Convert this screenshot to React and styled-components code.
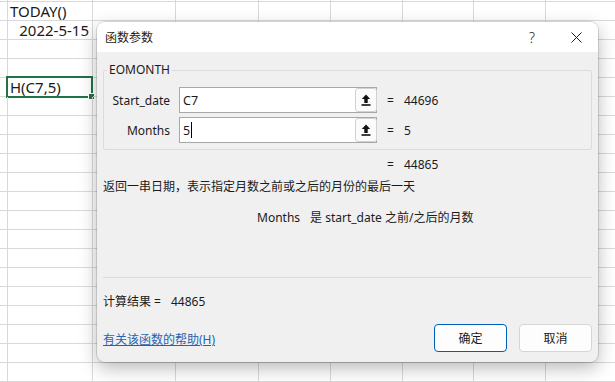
import React from "react";
import styled, { createGlobalStyle } from "styled-components";

const GlobalStyle = createGlobalStyle`
  html, body {
    margin: 0;
    padding: 0;
    background: #ffffff;
    overflow: hidden;
  }
  body {
    font-family: "Noto Sans", "Noto Sans CJK SC", sans-serif;
  }
`;

const colWidths = [8, 85, 83, 83, 72, 72, 71, 72, 72];
const rowCount = 21;

const cellTexts = {
  "1-1": { text: "TODAY()", align: "left" },
  "2-1": { text: "2022-5-15", align: "right" },
  "5-1": { text: "H(C7,5)", align: "left", selected: true },
};

const App = () => {
  return (
    <Page>
      <GlobalStyle />
      <Sheet>
        {Array.from({ length: rowCount + 1 }).map((_, r) =>
          colWidths.map((w, c) => {
            const cell = cellTexts[`${r}-${c}`];
            return (
              <Cell key={`${r}-${c}`} $align={cell?.align}>
                {cell && cell.text}
                {cell?.selected && (
                  <Selection>
                    <Handle />
                  </Selection>
                )}
              </Cell>
            );
          })
        )}
      </Sheet>

      <Dialog>
        <TitleBar>
          <Title>函数参数</Title>
          <TitleButtons>
            <TitleButton>?</TitleButton>
            <TitleButton>
              <svg width="11" height="11" viewBox="0 0 11 11">
                <path
                  d="M0.5 0.5 L10.5 10.5 M10.5 0.5 L0.5 10.5"
                  stroke="#1b1b1b"
                  strokeWidth="1"
                  fill="none"
                />
              </svg>
            </TitleButton>
          </TitleButtons>
        </TitleBar>

        <Body>
          <Group>
            <Legend>EOMONTH</Legend>
            <ArgRow>
              <ArgLabel>Start_date</ArgLabel>
              <ArgInput>
                <InputText>C7</InputText>
                <RefButton>
                  <UploadIcon />
                </RefButton>
              </ArgInput>
              <Equals>=</Equals>
              <ArgValue>44696</ArgValue>
            </ArgRow>
            <ArgRow>
              <ArgLabel>Months</ArgLabel>
              <ArgInput>
                <InputText>
                  5<Caret />
                </InputText>
                <RefButton>
                  <UploadIcon />
                </RefButton>
              </ArgInput>
              <Equals>=</Equals>
              <ArgValue>5</ArgValue>
            </ArgRow>
          </Group>

          <ResultRow>
            <Equals>=</Equals>
            <ArgValue>44865</ArgValue>
          </ResultRow>

          <Description>返回一串日期，表示指定月数之前或之后的月份的最后一天</Description>

          <ArgHelp>
            <ArgHelpName>Months</ArgHelpName>是 start_date 之前/之后的月数
          </ArgHelp>

          <Separator />

          <Formula>
            计算结果 =<FormulaValue>44865</FormulaValue>
          </Formula>

          <Footer>
            <HelpLink>有关该函数的帮助(H)</HelpLink>
            <Buttons>
              <DialogButton $primary>确定</DialogButton>
              <DialogButton>取消</DialogButton>
            </Buttons>
          </Footer>
        </Body>
      </Dialog>
    </Page>
  );
};

const UploadIcon = () => (
  <svg width="10" height="12" viewBox="0 0 10 12">
    <path d="M5 0.5 L0.8 5 H3.3 V9 H6.7 V5 H9.2 Z" fill="#111" />
    <rect x="0.5" y="10.2" width="9" height="1.6" fill="#111" />
  </svg>
);

const Page = styled.div`
  position: relative;
  width: 615px;
  height: 382px;
  overflow: hidden;
  background: #ffffff;
`;

const Sheet = styled.div`
  display: grid;
  grid-template-columns: ${colWidths.map((w) => `${w}px`).join(" ")};
  grid-template-rows: 2px repeat(${rowCount}, 19px);
  font-family: "Noto Sans", "Noto Sans CJK SC", sans-serif;
  font-size: 15px;
  color: #1a1a1a;
`;

const Cell = styled.div`
  position: relative;
  box-sizing: border-box;
  border-right: 1px solid #d9d9d9;
  border-bottom: 1px solid #d9d9d9;
  line-height: 18px;
  white-space: nowrap;
  text-align: ${(p) => p.$align || "left"};
  padding: ${(p) => (p.$align === "right" ? "0 3px 0 0" : "0 0 0 2px")};
`;

const Selection = styled.div`
  position: absolute;
  left: -2px;
  top: -2px;
  right: -1px;
  bottom: -2px;
  border: 2px solid #217346;
  pointer-events: none;
`;

const Handle = styled.div`
  position: absolute;
  right: -4px;
  bottom: -4px;
  width: 5px;
  height: 5px;
  background: #217346;
  border: 1px solid #ffffff;
`;

const Dialog = styled.div`
  position: absolute;
  left: 97px;
  top: 22px;
  width: 501px;
  height: 340px;
  display: flex;
  flex-direction: column;
  border-radius: 8px;
  overflow: hidden;
  background: #f0f0f0;
  box-shadow: 0 0 0 1px rgba(0, 0, 0, 0.12), 0 6px 18px rgba(0, 0, 0, 0.28);
  font-family: "Noto Sans", "Noto Sans CJK SC", sans-serif;
  font-size: 12px;
  color: #1b1b1b;
`;

const TitleBar = styled.div`
  height: 30px;
  flex-shrink: 0;
  display: flex;
  align-items: center;
  justify-content: space-between;
  background: #ffffff;
  padding-left: 8px;
`;

const Title = styled.span`
  font-size: 12px;
`;

const TitleButtons = styled.div`
  display: flex;
  height: 100%;
`;

const TitleButton = styled.div`
  width: 44px;
  height: 100%;
  display: flex;
  align-items: center;
  justify-content: center;
  font-size: 14px;
  font-weight: 300;
`;

const Body = styled.div`
  flex: 1;
  display: flex;
  flex-direction: column;
  padding: 0 6px 10px;
`;

const Group = styled.fieldset`
  margin: 10px 0 0;
  padding: 9px 0 6px;
  border: 1px solid #dcdcdc;
  border-radius: 2px;
  display: flex;
  flex-direction: column;
  gap: 4px;
`;

const Legend = styled.legend`
  margin-left: 3px;
  padding: 0 2px;
  line-height: 16px;
  font-size: 12px;
`;

const ArgRow = styled.div`
  display: flex;
  align-items: center;
  height: 26px;
`;

const ArgLabel = styled.span`
  width: 66px;
  text-align: right;
  margin-right: 9px;
`;

const ArgInput = styled.div`
  box-sizing: border-box;
  width: 198px;
  height: 26px;
  display: flex;
  align-items: center;
  justify-content: space-between;
  background: #ffffff;
  border: 1px solid #a8a8a8;
  padding: 0 0 0 3px;
`;

const InputText = styled.span`
  display: flex;
  align-items: center;
  font-size: 12.5px;
`;

const Caret = styled.span`
  display: inline-block;
  width: 1px;
  height: 16px;
  margin-left: 1px;
  background: #000000;
`;

const RefButton = styled.div`
  box-sizing: border-box;
  width: 22px;
  height: 24px;
  display: flex;
  align-items: center;
  justify-content: center;
  background: #fbfbfb;
  border: 1px solid #d2d2d2;
  border-radius: 3px;
  margin-right: -1px;
`;

const Equals = styled.span`
  margin-left: 10px;
  width: 17px;
`;

const ArgValue = styled.span``;

const ResultRow = styled.div`
  display: flex;
  align-items: center;
  line-height: 16px;
  margin-top: 7px;
  padding-left: 274px;
`;

const Description = styled.div`
  line-height: 16px;
  margin-top: 6px;
`;

const ArgHelp = styled.div`
  line-height: 16px;
  margin-top: 15px;
  padding-left: 154px;
`;

const ArgHelpName = styled.span`
  margin-right: 10px;
`;

const Separator = styled.div`
  height: 1px;
  background: #dadada;
  margin-top: 51px;
`;

const Formula = styled.div`
  line-height: 16px;
  margin-top: 16px;
  white-space: nowrap;
`;

const FormulaValue = styled.span`
  margin-left: 10px;
`;

const Footer = styled.div`
  display: flex;
  align-items: center;
  justify-content: space-between;
  margin-top: 14px;
`;

const HelpLink = styled.a`
  color: #1f63b3;
  text-decoration: underline;
  margin-top: 2px;
`;

const Buttons = styled.div`
  display: flex;
  gap: 12px;
`;

const DialogButton = styled.button`
  box-sizing: border-box;
  width: 73px;
  height: 28px;
  font-family: "Noto Sans", "Noto Sans CJK SC", sans-serif;
  font-size: 12px;
  color: #1b1b1b;
  background: #fdfdfd;
  border: 1px solid ${(p) => (p.$primary ? "#005fb8" : "#d5d5d5")};
  border-radius: 4px;
`;

export default App;
